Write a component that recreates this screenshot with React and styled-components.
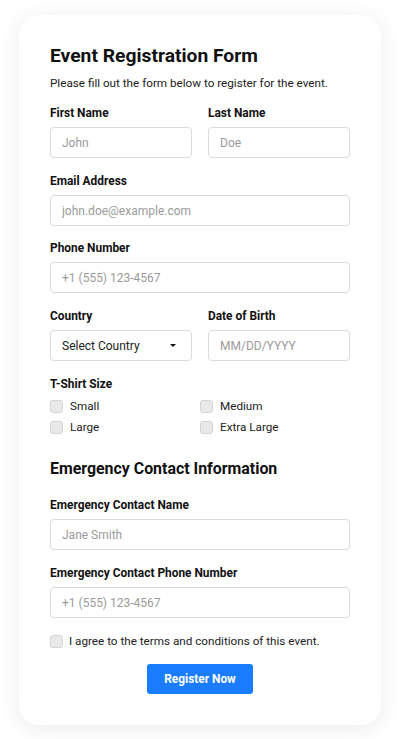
import React from "react";
import styled, { createGlobalStyle } from "styled-components";

const Global = createGlobalStyle`
  html, body { margin: 0; padding: 0; background: #fff; }
  body { font-family: Roboto, "Liberation Sans", sans-serif; color: #1a1a1a; }
  * { box-sizing: border-box; }
`;

const Page = styled.div`
  padding: 15px 19px;
`;

const Card = styled.form`
  background: #fff;
  border-radius: 20px;
  box-shadow: 0 4px 22px rgba(0, 0, 0, 0.08);
  padding: 29px 31px 31px;
  display: flex;
  flex-direction: column;
`;

const Title = styled.h1`
  margin: 0;
  font-size: 19.25px;
  font-weight: 700;
  line-height: 24px;
  color: #111;
`;

const Subtitle = styled.p`
  margin: 7px 0 15px;
  font-size: 11.7px;
  line-height: 16px;
  color: #222;
`;

const SectionTitle = styled.h2`
  margin: 8px 0 18px;
  font-size: 15.9px;
  font-weight: 700;
  line-height: 22px;
  color: #111;
`;

const Row = styled.div`
  display: grid;
  grid-template-columns: minmax(0, 1fr) minmax(0, 1fr);
  column-gap: 16px;
`;

const Field = styled.div`
  display: flex;
  flex-direction: column;
  margin-bottom: ${(p) => (p.$tight ? "15px" : "16px")};
  min-width: 0;
`;

const Label = styled.label`
  font-size: 11.9px;
  font-weight: 700;
  line-height: 14px;
  margin-bottom: 7px;
  color: #111;
`;

const Input = styled.input`
  width: 100%;
  height: 31px;
  border: 1px solid #dadada;
  border-radius: 4px;
  padding: 0 11px;
  font-family: inherit;
  font-size: 12px;
  color: #222;
  background: #fff;
  outline: none;
  &::placeholder { color: #9b9b9b; }
`;

const SelectBox = styled.div`
  height: 31px;
  border: 1px solid #dadada;
  border-radius: 4px;
  padding: 0 15px 0 11px;
  display: flex;
  align-items: center;
  justify-content: space-between;
  font-size: 12px;
  color: #222;
`;

const Caret = styled.span`
  width: 0;
  height: 0;
  border-left: 3px solid transparent;
  border-right: 3px solid transparent;
  border-top: 3.5px solid #111;
`;

const CheckGrid = styled.div`
  display: grid;
  grid-template-columns: 150px 1fr;
  row-gap: 7px;
  margin-top: 1px;
`;

const CheckItem = styled.label`
  display: flex;
  align-items: center;
  gap: 7px;
  font-size: 11.7px;
  line-height: 14px;
  color: #222;
`;

const Box = styled.span`
  width: 13px;
  height: 13px;
  border: 1px solid #d4d4d4;
  background: #e9e9e9;
  border-radius: 3px;
  flex-shrink: 0;
`;

const Agree = styled(CheckItem)`
  gap: 6px;
`;

const ButtonRow = styled.div`
  display: flex;
  justify-content: center;
  margin-top: 16px;
`;

const Button = styled.button`
  width: 106px;
  height: 30px;
  border: none;
  border-radius: 3px;
  background: #1a7cff;
  color: #fff;
  font-family: inherit;
  font-size: 11.9px;
  font-weight: 700;
  cursor: pointer;
`;

const FieldBlock = ({ label, placeholder, tight }) => (
  <Field $tight={tight}>
    <Label>{label}</Label>
    <Input placeholder={placeholder} />
  </Field>
);

export default function App() {
  return (
    <Page>
      <Global />
      <Card onSubmit={(e) => e.preventDefault()}>
        <Title>Event Registration Form</Title>
        <Subtitle>Please fill out the form below to register for the event.</Subtitle>
        <Row>
          <FieldBlock label="First Name" placeholder="John" />
          <FieldBlock label="Last Name" placeholder="Doe" />
        </Row>
        <FieldBlock label="Email Address" placeholder="john.doe@example.com" tight />
        <FieldBlock label="Phone Number" placeholder="+1 (555) 123-4567" />
        <Row>
          <Field>
            <Label>Country</Label>
            <SelectBox>
              <span>Select Country</span>
              <Caret />
            </SelectBox>
          </Field>
          <FieldBlock label="Date of Birth" placeholder="MM/DD/YYYY" />
        </Row>
        <Field>
          <Label>T-Shirt Size</Label>
          <CheckGrid>
            <CheckItem><Box />Small</CheckItem>
            <CheckItem><Box />Medium</CheckItem>
            <CheckItem><Box />Large</CheckItem>
            <CheckItem><Box />Extra Large</CheckItem>
          </CheckGrid>
        </Field>
        <SectionTitle>Emergency Contact Information</SectionTitle>
        <FieldBlock label="Emergency Contact Name" placeholder="Jane Smith" />
        <FieldBlock label="Emergency Contact Phone Number" placeholder="+1 (555) 123-4567" />
        <Agree><Box />I agree to the terms and conditions of this event.</Agree>
        <ButtonRow>
          <Button type="submit">Register Now</Button>
        </ButtonRow>
      </Card>
    </Page>
  );
}
